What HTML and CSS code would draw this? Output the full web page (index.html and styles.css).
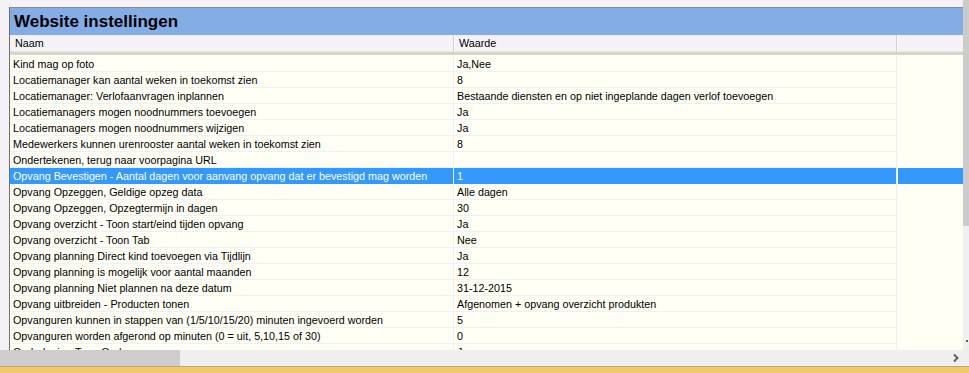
FILE: index.html
```html
<!DOCTYPE html>
<html lang="nl">
<head>
    <meta charset="UTF-8">
    <title>Website instellingen</title>
    <link rel="stylesheet" href="styles.css">
</head>
<body>
    <div class="window">
        <div class="main">
            <div class="frame">
                <div class="title">Website instellingen</div>

                <!-- kolomkoppen -->
                <div class="grid-head">
                    <div class="hcell">Naam</div>
                    <div class="hcell">Waarde</div>
                    <div class="hcell filler"></div>
                </div>

                <!-- instellingen -->
                <div class="rows">
                    <div class="row"><div class="cell">Kind mag op foto</div><div class="cell">Ja,Nee</div><div class="rest"></div></div>
                    <div class="row"><div class="cell">Locatiemanager kan aantal weken in toekomst zien</div><div class="cell">8</div><div class="rest"></div></div>
                    <div class="row"><div class="cell">Locatiemanager: Verlofaanvragen inplannen</div><div class="cell">Bestaande diensten en op niet ingeplande dagen verlof toevoegen</div><div class="rest"></div></div>
                    <div class="row"><div class="cell">Locatiemanagers mogen noodnummers toevoegen</div><div class="cell">Ja</div><div class="rest"></div></div>
                    <div class="row"><div class="cell">Locatiemanagers mogen noodnummers wijzigen</div><div class="cell">Ja</div><div class="rest"></div></div>
                    <div class="row"><div class="cell">Medewerkers kunnen urenrooster aantal weken in toekomst zien</div><div class="cell">8</div><div class="rest"></div></div>
                    <div class="row"><div class="cell">Ondertekenen, terug naar voorpagina URL</div><div class="cell"></div><div class="rest"></div></div>
                    <div class="row selected"><div class="cell">Opvang Bevestigen - Aantal dagen voor aanvang opvang dat er bevestigd mag worden</div><div class="cell">1</div><div class="rest"></div></div>
                    <div class="row"><div class="cell">Opvang Opzeggen, Geldige opzeg data</div><div class="cell">Alle dagen</div><div class="rest"></div></div>
                    <div class="row"><div class="cell">Opvang Opzeggen, Opzegtermijn in dagen</div><div class="cell">30</div><div class="rest"></div></div>
                    <div class="row"><div class="cell">Opvang overzicht - Toon start/eind tijden opvang</div><div class="cell">Ja</div><div class="rest"></div></div>
                    <div class="row"><div class="cell">Opvang overzicht - Toon Tab</div><div class="cell">Nee</div><div class="rest"></div></div>
                    <div class="row"><div class="cell">Opvang planning Direct kind toevoegen via Tijdlijn</div><div class="cell">Ja</div><div class="rest"></div></div>
                    <div class="row"><div class="cell">Opvang planning is mogelijk voor aantal maanden</div><div class="cell">12</div><div class="rest"></div></div>
                    <div class="row"><div class="cell">Opvang planning Niet plannen na deze datum</div><div class="cell">31-12-2015</div><div class="rest"></div></div>
                    <div class="row"><div class="cell">Opvang uitbreiden - Producten tonen</div><div class="cell">Afgenomen + opvang overzicht produkten</div><div class="rest"></div></div>
                    <div class="row"><div class="cell">Opvanguren kunnen in stappen van (1/5/10/15/20) minuten ingevoerd worden</div><div class="cell">5</div><div class="rest"></div></div>
                    <div class="row"><div class="cell">Opvanguren worden afgerond op minuten (0 = uit, 5,10,15 of 30)</div><div class="cell">0</div><div class="rest"></div></div>
                    <div class="row"><div class="cell">Ouderlogin - Toon Ouders</div><div class="cell">Ja</div><div class="rest"></div></div>
                </div>
            </div>
            <div class="vscroll">
                <div class="vthumb"></div>
                <div class="vtrack"><span class="vtick"></span></div>
            </div>
        </div>

        <div class="hscroll">
            <div class="hthumb"></div>
            <div class="harrow">
                <svg width="10" height="10" viewBox="0 0 10 10"><path d="M3 1.5 L6.5 5 L3 8.5" fill="none" stroke="#5f5f5f" stroke-width="2"/></svg>
            </div>
        </div>
        <div class="status"></div>
    </div>
</body>
</html>
```

FILE: styles.css
```css
body {
    margin: 0;
    font-family: "Liberation Sans", Arial, sans-serif;
    font-size: 10.75px;
    color: #000;
    background: #f4f2f6;
}
.window {
    width: 969px;
    height: 373px;
    overflow: hidden;
    display: flex;
    flex-direction: column;
}
.main {
    flex: 1;
    display: flex;
    min-height: 0;
    padding-top: 7px;
}
.frame {
    flex: 1;
    margin-left: 9px;
    border-left: 1px solid #6f6f6f;
    border-top: 1px solid #8a8a8a;
    background: #fffff6;
    overflow: hidden;
    border-bottom-right-radius: 3px;
}
.title {
    height: 27px;
    line-height: 27px;
    padding-left: 4px;
    background: #84ade6;
    font-size: 17px;
    font-weight: bold;
}
.grid-head {
    display: grid;
    grid-template-columns: 444px 443px 1fr;
    height: 17px;
    background: #f5f2f7;
    border-bottom: 3px solid #d8d4cc;
    box-shadow: inset 0 -1px 0 #e8e6e0;
}
.hcell {
    line-height: 17px;
    padding-left: 5px;
    border-right: 1px solid #d0d0d0;
    box-shadow: 1px 0 0 #fff;
}
.hcell.filler {
    border-right: 0;
    box-shadow: none;
}
.rows {
    padding-top: 1px;
}
.row {
    display: grid;
    grid-template-columns: 444px 443px 1fr;
    height: 16px;
}
.cell {
    line-height: 17px;
    padding-left: 3px;
    white-space: nowrap;
    overflow: hidden;
    border-right: 1px solid #efedf5;
    box-shadow: inset 0 -1px 0 #f0eef6;
}
.row.selected .cell,
.row.selected .rest {
    background: #3399ff;
    color: #fff;
    box-shadow: none;
}
.row.selected .rest {
    margin-left: 1px;
}
.vscroll {
    width: 6px;
    display: flex;
    flex-direction: column;
    margin-top: -7px;
}
.vthumb {
    height: 226px;
    background: #cbcbcb;
}
.vtrack {
    flex: 1;
    background: #f0f0f0;
    position: relative;
}
.vtick {
    position: absolute;
    left: 3px;
    top: 114px;
    width: 2px;
    height: 2px;
    background: #606060;
}
.hscroll {
    height: 16px;
    display: flex;
    align-items: center;
    background: #efefef;
}
.hthumb {
    width: 180px;
    height: 16px;
    background: #cdcdcd;
}
.harrow {
    margin-left: auto;
    margin-right: 8px;
    display: flex;
}
.status {
    height: 6px;
    background: #f0c96a;
    border-top: 1px solid #b4a883;
}
```
